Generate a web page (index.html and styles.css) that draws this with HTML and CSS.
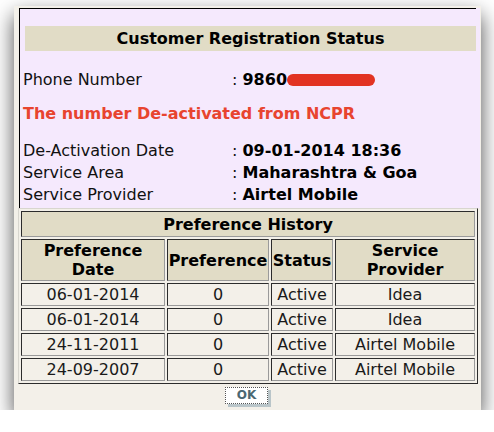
FILE: index.html
```html
<!DOCTYPE html>
<html>
<head>
<meta charset="utf-8">
<link rel="stylesheet" href="styles.css">
</head>
<body>
<div class="stage">
  <div class="dialog">
    <div class="panel">
      <div class="heading">Customer Registration Status</div>
      <div class="row phone">
        <span class="label">Phone Number</span>
        <span class="value"><span class="colon">:</span> <b>9860</b><span class="redact"></span></span>
      </div>
      <div class="alert">The number De-activated from NCPR</div>
      <div class="details">
        <div class="row">
          <span class="label">De-Activation Date</span>
          <span class="value"><span class="colon">:</span> <b>09-01-2014 18:36</b></span>
        </div>
        <div class="row">
          <span class="label">Service Area</span>
          <span class="value"><span class="colon">:</span> <b>Maharashtra &amp; Goa</b></span>
        </div>
        <div class="row">
          <span class="label">Service Provider</span>
          <span class="value"><span class="colon">:</span> <b>Airtel Mobile</b></span>
        </div>
      </div>
    </div>
    <table class="history">
      <colgroup>
        <col class="c1"><col class="c2"><col class="c3"><col class="c4">
      </colgroup>
      <tr><th colspan="4" class="title">Preference History</th></tr>
      <tr class="heads">
        <th>Preference<br>Date</th>
        <th>Preference</th>
        <th>Status</th>
        <th>Service<br>Provider</th>
      </tr>
      <tr><td>06-01-2014</td><td>0</td><td>Active</td><td>Idea</td></tr>
      <tr><td>06-01-2014</td><td>0</td><td>Active</td><td>Idea</td></tr>
      <tr><td>24-11-2011</td><td>0</td><td>Active</td><td>Airtel Mobile</td></tr>
      <tr><td>24-09-2007</td><td>0</td><td>Active</td><td>Airtel Mobile</td></tr>
    </table>
    <div class="actions">
      <button class="ok">OK</button>
    </div>
  </div>
</div>
</body>
</html>
```
FILE: styles.css
```css
html, body {
  margin: 0;
  padding: 0;
  background: #ffffff;
}
body {
  font-family: "DejaVu Sans", Verdana, sans-serif;
  font-size: 16px;
  color: #111;
}
.stage {
  padding: 6px 0 0 14px;
}
.dialog {
  width: 467px;
  height: 404px;
  box-sizing: border-box;
  background: #f3f0e9;
  box-shadow: 0 9px 20px rgba(0, 0, 0, 0.7);
  padding: 2px 1px 0 5px;
}
.panel {
  box-sizing: border-box;
  height: 200px;
  border-left: 1px solid #000;
  padding: 18px 4px 0 3px;
  background:
    linear-gradient(#000, #000) top left / calc(100% - 4px) 1px no-repeat,
    #f5e9fd;
}
.heading {
  margin-left: 2px;
  height: 25px;
  line-height: 25px;
  background: #e1dcc6;
  text-align: center;
  font-weight: bold;
  color: #000;
}
.row {
  display: grid;
  grid-template-columns: 208px 1fr;
  height: 22px;
  line-height: 23px;
}
.phone {
  margin-top: 17px;
}
.value b {
  font-weight: bold;
  color: #000;
}
.colon {
  padding-left: 1px;
}
.redact {
  display: inline-block;
  width: 88px;
  height: 12px;
  border-radius: 6px;
  background: #e23322;
  vertical-align: -1px;
}
.alert {
  margin-top: 12px;
  height: 22px;
  line-height: 23px;
  color: #e8442f;
  font-weight: bold;
}
.details {
  margin-top: 15px;
}
.history {
  margin: 0 0 0 -1px;
  width: 460px;
  border-collapse: separate;
  border-spacing: 2px;
  border: 1px solid;
  border-color: #d8d6cf #2c2c2c #2c2c2c #d8d6cf;
  table-layout: fixed;
}
.c1 { width: 144px; }
.c2 { width: 102px; }
.c3 { width: 62px; }
.c4 { width: 140px; }
.history th,
.history td {
  border: 1px solid;
  border-color: #2c2c2c #9a9a9a #9a9a9a #2c2c2c;
  padding: 0;
  text-align: center;
}
.history th {
  background: #e1dcc6;
  font-weight: bold;
  color: #000;
  line-height: 19px;
}
.history th.title {
  height: 24px;
}
.heads th {
  height: 40px;
}
.history td {
  height: 21px;
  line-height: 21px;
  color: #1a1a1a;
}
.actions {
  display: flex;
  justify-content: center;
  padding-top: 3px;
  padding-right: 6px;
}
.ok {
  width: 43px;
  height: 17px;
  padding: 0;
  background: #ffffff;
  border: 1px dotted #555;
  box-shadow: 3px 3px 0 #b9c5c9;
  font-family: "DejaVu Sans", Verdana, sans-serif;
  font-size: 12px;
  font-weight: bold;
  color: #4b6872;
  line-height: 15px;
}
```
